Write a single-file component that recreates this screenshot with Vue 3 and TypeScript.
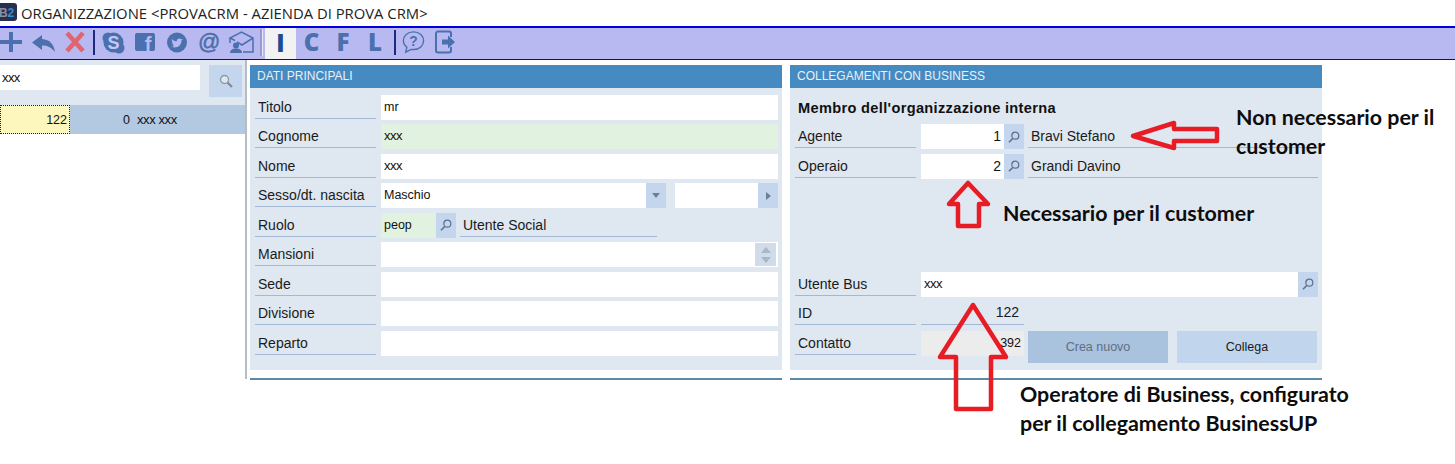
<script setup lang="ts">
const leftFull = [
  { label: 'Titolo', value: 'mr', tone: '' },
  { label: 'Cognome', value: 'xxx', tone: 'green tight' },
  { label: 'Nome', value: 'xxx', tone: 'tight' },
]
const leftRest = ['Sede', 'Divisione', 'Reparto']
const people = [
  { label: 'Agente', id: '1', name: 'Bravi Stefano' },
  { label: 'Operaio', id: '2', name: 'Grandi Davino' },
]
</script>

<template>
  <div class="page">
    <header class="titlebar">
      <svg class="logo" width="17" height="18" viewBox="0 0 17 18">
        <rect x="-3" width="20" height="18" rx="3" fill="#2b2f4e" />
        <text x="-1" y="14" class="glyph" font-size="12" fill="#8a90a0">B</text>
        <text x="7.500" y="14" class="glyph" font-size="12" fill="#2f8fd8">2</text>
      </svg>
      <span>ORGANIZZAZIONE &lt;PROVACRM - AZIENDA DI PROVA CRM&gt;</span>
    </header>

    <nav class="toolbar">
      <svg class="tool w22" viewBox="0 0 22 24"><path d="M11 2v20M0 12h22" stroke="#4a70ad" stroke-width="4" fill="none" /></svg>
      <svg class="tool w23 ml10" viewBox="0 0 23 24"><path d="M10 5 0 12.500 10 20v-4.500c5.500 0 9 1.500 13 6.500-1-7.500-5-12.500-13-13z" fill="#4a70ad" /></svg>
      <svg class="tool w20 ml10" viewBox="0 0 20 24"><path d="M2 3l16 18M18 3 2 21" stroke="#e0656f" stroke-width="4.500" fill="none" /></svg>
      <i class="sep dark ml8"></i>
      <svg class="tool w23 ml7" viewBox="0 0 23 24">
        <circle cx="6" cy="8" r="5.500" fill="#4a70ad" /><circle cx="17" cy="18" r="5.500" fill="#4a70ad" /><circle cx="11.500" cy="12.500" r="10" fill="#4a70ad" />
        <text x="11.500" y="19" text-anchor="middle" class="glyph" font-size="18" fill="#c6c6f5">S</text>
      </svg>
      <svg class="tool w20 ml10" viewBox="0 0 20 24">
        <rect y="3" width="20" height="18" rx="2" fill="#4a70ad" />
        <text x="13" y="21" text-anchor="middle" class="glyph" font-size="20" fill="#b9b9f1">f</text>
      </svg>
      <svg class="tool w20 ml12" viewBox="0 0 20 24">
        <circle cx="10" cy="12.500" r="10" fill="#4a70ad" />
        <path transform="translate(-1 .5)" d="M5 16c3 1.500 6 1.200 8-.5 2-1.700 2.500-4 2.500-5.500l1.500-1.500-2 .3c-1-1.500-4.500-1-4.200 2-2 0-3.500-.8-4.800-2.300-.5 1.500 0 2.700 1 3.500l-1-.2c0 1.200.8 2 2 2.500H6.500c.4.800 1 1.200 2 1.300-1 .6-2.200.7-3.500.4z" fill="#b9b9f1" />
      </svg>
      <span class="at ml11">@</span>
      <svg class="tool w25 ml9" viewBox="0 0 25 24">
        <path d="M6 10.500 1 8 12.500 2 24 8V22H14M24 8 13 15 8 12M1 8V13" fill="none" stroke="#4a70ad" stroke-width="1.500" />
        <circle cx="7" cy="15.500" r="3" fill="#4a70ad" /><path d="M1 23c0-3 2-4.500 6-4.500s6 1.500 6 4.500z" fill="#4a70ad" />
      </svg>
      <i class="sep light ml6"></i>
      <span class="letter selected">I</span>
      <span class="letter ml7 w17">C</span>
      <span class="letter ml16 w14">F</span>
      <span class="letter ml18 w14">L</span>
      <i class="sep dark ml12"></i>
      <svg class="tool w23 ml6" viewBox="0 0 25 26">
        <path d="M12.500 2C6 2 1.500 6.200 1.500 11.500c0 3 1.500 5.500 3.800 7.300L4 24l6-3c.8.100 1.700.200 2.500.200 6.500 0 11-4.400 11-9.700S19 2 12.500 2z" fill="none" stroke="#4a70ad" stroke-width="1.500" />
        <text x="12.500" y="17" text-anchor="middle" class="glyph" font-size="15" fill="#4a70ad">?</text>
      </svg>
      <svg class="tool w20 ml10" viewBox="0 0 20 24">
        <path d="M16 7V3.500A2 2 0 0 0 14 1.500H3A2 2 0 0 0 1 3.500v17a2 2 0 0 0 2 2h11a2 2 0 0 0 2-2V17" fill="none" stroke="#4a70ad" stroke-width="2" />
        <path d="M7 9.500h6V5.500l7 6.500-7 6.500v-4H7z" fill="#4a70ad" />
      </svg>
    </nav>

    <main class="main">
      <aside class="side">
        <div class="search">
          <div class="search-input">xxx</div>
          <button class="search-btn" type="button">
            <svg width="14" height="14" viewBox="0 0 14 14">
              <circle cx="5.500" cy="5.500" r="4" fill="#dfe7ef" stroke="#8d9aa6" stroke-width="1.300" />
              <path d="M8.500 8.500 13 13" stroke="#7f8b97" stroke-width="2.200" />
            </svg>
          </button>
        </div>
        <div class="result">
          <div class="result-id">122</div>
          <div class="result-num">0</div>
          <div class="result-name">xxx xxx</div>
        </div>
      </aside>

      <section class="column">
        <div class="panel">
          <h2 class="panel-head">DATI PRINCIPALI</h2>
          <div class="rows">
            <div v-for="r in leftFull" :key="r.label" class="row">
              <label class="lab">{{ r.label }}</label>
              <div class="field grow" :class="r.tone">{{ r.value }}</div>
            </div>
            <div class="row">
              <label class="lab">Sesso/dt. nascita</label>
              <div class="field sex">Maschio</div>
              <button class="icon-btn" type="button"><i class="tri down"></i></button>
              <div class="field date"></div>
              <button class="icon-btn" type="button"><i class="tri right"></i></button>
            </div>
            <div class="row">
              <label class="lab">Ruolo</label>
              <div class="field role green">peop</div>
              <button class="icon-btn" type="button">
                <svg class="lens" viewBox="0 0 12 12"><circle cx="7.300" cy="4.700" r="3.500" fill="none" stroke="#5a7290" stroke-width="1.200" /><path d="M5 7.300 1 11.200" stroke="#5a7290" stroke-width="1.600" /></svg>
              </button>
              <div class="text-val role-text">Utente Social</div>
            </div>
            <div class="row">
              <label class="lab">Mansioni</label>
              <div class="field grow spin-host">
                <div class="spin"><i class="tri up"></i><i class="tri down"></i></div>
              </div>
            </div>
            <div v-for="r in leftRest" :key="r" class="row">
              <label class="lab">{{ r }}</label>
              <div class="field grow"></div>
            </div>
          </div>
        </div>
        <div class="rule"></div>
      </section>

      <section class="column second">
        <div class="panel">
          <h2 class="panel-head">COLLEGAMENTI CON BUSINESS</h2>
          <div class="member">Membro dell'organizzazione interna</div>
          <div class="rows people">
            <div v-for="p in people" :key="p.label" class="row">
              <label class="lab">{{ p.label }}</label>
              <div class="field num">{{ p.id }}</div>
              <button class="icon-btn" type="button">
                <svg class="lens" viewBox="0 0 12 12"><circle cx="7.300" cy="4.700" r="3.500" fill="none" stroke="#5a7290" stroke-width="1.200" /><path d="M5 7.300 1 11.200" stroke="#5a7290" stroke-width="1.600" /></svg>
              </button>
              <div class="text-val person">{{ p.name }}</div>
            </div>
          </div>
          <div class="rows bus">
            <div class="row">
              <label class="lab">Utente Bus</label>
              <div class="field grow tight">xxx</div>
              <button class="icon-btn" type="button">
                <svg class="lens" viewBox="0 0 12 12"><circle cx="7.300" cy="4.700" r="3.500" fill="none" stroke="#5a7290" stroke-width="1.200" /><path d="M5 7.300 1 11.200" stroke="#5a7290" stroke-width="1.600" /></svg>
              </button>
            </div>
            <div class="row">
              <label class="lab">ID</label>
              <div class="text-val id-val">122</div>
            </div>
            <div class="row last">
              <label class="lab">Contatto</label>
              <div class="field contact">392</div>
              <button class="action off" type="button">Crea nuovo</button>
              <button class="action on" type="button">Collega</button>
            </div>
          </div>
        </div>
        <div class="rule"></div>
      </section>
    </main>

    <svg class="arrows" width="1455" height="464" viewBox="0 0 1455 464">
      <g fill="none" stroke="#e81c24" stroke-width="4.500" stroke-linejoin="round">
        <path d="M1133 136 1174 123V129H1217V141H1174V148Z" />
        <path d="M968 183 988 204H979V226H958V204H949Z" />
        <path d="M973 305 1006 357H991V409H956V357H940Z" />
      </g>
    </svg>
    <div class="note n1">Non necessario per il<br />customer</div>
    <div class="note n2">Necessario per il customer</div>
    <div class="note n3">Operatore di Business, configurato<br />per il collegamento BusinessUP</div>
  </div>
</template>

<style scoped>
.page {
  position: relative;
  width: 1455px;
  height: 464px;
  overflow: hidden;
  background: #fff;
  font-family: "Liberation Sans", Arial, sans-serif;
  color: #111;
}
.titlebar {
  height: 26px;
  display: flex;
  align-items: center;
  gap: 4px;
  font: 14.840px "Open Sans", sans-serif;
  color: #222;
}
.logo { margin-top: -2px; }
.toolbar {
  height: 28px;
  padding-bottom: 3px;
  box-sizing: content-box;
  border-top: 2px solid #0000d8;
  border-bottom: 1px solid #101070;
  background: #b9b9f1;
  display: flex;
  align-items: center;
}
.tool { height: 24px; flex: none; display: block; overflow: visible; }
.w20 { width: 20px; }
.w22 { width: 22px; }
.w23 { width: 23px; }
.w25 { width: 25px; }
.glyph { font-family: "Liberation Sans", sans-serif; font-weight: 700; }
.at {
  width: 22px;
  font: 400 22px/28px "Liberation Sans", sans-serif;
  -webkit-text-stroke: .5px #4a70ad;
  color: #4a70ad;
  text-align: center;
  flex: none;
}
.sep { width: 2px; height: 25px; flex: none; }
.sep.dark { background: #1d2a80; }
.sep.light { width: 3px; background: #9a9ac8; border-right: 1px solid #e5e5fa; height: 27px; box-sizing: border-box; }
.letter {
  flex: none;
  font: 800 24px/28px "Open Sans", sans-serif;
  color: #4a70ad;
  text-align: center;
}
.selected {
  width: 31px;
  height: 31px;
  margin: 0 0 -3px 2px;
  line-height: 29px;
  background: #f2f2f2;
  color: #1c4a94;
}
.w17 { width: 17px; }
.w14 { width: 14px; }
.ml6 { margin-left: 6px; }
.ml7 { margin-left: 7px; }
.ml8 { margin-left: 8px; }
.ml9 { margin-left: 9px; }
.ml10 { margin-left: 10px; }
.ml11 { margin-left: 11px; }
.ml12 { margin-left: 12px; }
.ml16 { margin-left: 16px; }
.ml18 { margin-left: 18px; }

.main { display: flex; height: 319px; }
.side {
  width: 245px;
  flex: none;
  border-right: 2px solid #b4bcc8;
  box-sizing: content-box;
}
.search {
  height: 45px;
  box-sizing: border-box;
  padding-top: 5px;
  background: #dfe7f1;
  display: flex;
  align-items: flex-start;
}
.search-input {
  width: 200px;
  height: 25px;
  background: #fff;
  font-size: 13px;
  line-height: 25px;
  letter-spacing: -.6px;
  padding-left: 2px;
  box-sizing: border-box;
}
.search-btn {
  width: 33px;
  height: 32px;
  margin-left: 9px;
  border: 0;
  padding: 0;
  background: #c3d6ed;
  display: flex;
  align-items: center;
  justify-content: center;
}
.result { display: flex; height: 29px; background: #b3c9e2; font-size: 12.500px; line-height: 30px; }
.result-id {
  width: 70px;
  box-sizing: border-box;
  background: #fdf7bd;
  border: 1px dotted #222;
  line-height: 28px;
  text-align: right;
  padding-right: 2px;
}
.result-num { width: 60px; text-align: right; }
.result-name { margin-left: 7px; font-size: 13px; letter-spacing: -.4px; }

.column { width: 532px; flex: none; margin-left: 3px; padding-top: 5px; }
.column.second { margin-left: 8px; }
.panel { height: 305px; background: #dfe7f1; box-sizing: border-box; }
.panel-head {
  margin: 0;
  height: 23px;
  background: #458bc2;
  color: #e8f0f8;
  font: 400 12px/23px "Liberation Sans", sans-serif;
  padding-left: 7px;
}
.rule { height: 2px; margin-top: 8px; background: #5b8aa8; }
.rows { display: flex; flex-direction: column; gap: 4.500px; padding: 6.900px 4px 0 5px; }
.row { display: flex; height: 25px; flex: none; }
.lab {
  width: 121px;
  flex: none;
  height: 25px;
  box-sizing: border-box;
  border-bottom: 1px solid #a3b8d4;
  padding: 4px 0 0 3px;
  font-size: 14px;
  line-height: 18px;
  color: #1a1a1a;
  margin-top: -1px;
}
.field {
  margin-left: 5px;
  height: 25px;
  background: #fff;
  padding-left: 3px;
  box-sizing: border-box;
  font-size: 12.500px;
  line-height: 24px;
}
.field.grow { flex: 1; }
.field.green { background: #e2f2e0; }
.field.tight { font-size: 13px; letter-spacing: -.5px; }
.sex { width: 265px; }
.date { width: 83px; margin-left: 9px; }
.role { width: 55px; }
.icon-btn {
  width: 20px;
  height: 25px;
  flex: none;
  border: 0;
  padding: 0;
  background: #c3d6ed;
  display: flex;
  align-items: center;
  justify-content: center;
}
.lens { width: 12px; height: 12px; }
.tri { display: block; width: 0; height: 0; border-style: solid; border-color: transparent; }
.tri.down { border-width: 5px 4px 0; border-top-color: #6e7f94; }
.tri.up { border-width: 0 5px 6px; border-bottom-color: #a9b6c6; }
.tri.right { border-width: 4px 0 4px 5px; border-left-color: #6e7f94; }
.spin-host { position: relative; }
.spin {
  position: absolute;
  right: 2px;
  top: 1px;
  width: 21px;
  height: 23px;
  background: #d0dcea;
  display: flex;
  flex-direction: column;
  align-items: center;
  justify-content: center;
  gap: 4px;
}
.spin .tri.down { border-width: 6px 5px 0; border-top-color: #a9b6c6; }
.text-val {
  height: 25px;
  box-sizing: border-box;
  border-bottom: 1px solid #a3b8d4;
  font-size: 14px;
  line-height: 26px;
  color: #1a1a1a;
  margin-top: -1px;
}
.role-text { width: 197px; margin-left: 4px; padding-left: 3px; }
.person { flex: 1; margin-left: 4px; padding-left: 3px; line-height: 27px; }
.member {
  font-size: 14.600px;
  font-weight: 700;
  letter-spacing: .33px;
  line-height: 16px;
  padding: 12px 0 0 8px;
  height: 17px;
}
.rows.people { padding-top: 7.100px; }
.people .row { width: 523px; }
.num { width: 83px; text-align: right; padding: 0 3px 0 0; font-size: 14px; }
.rows.bus { padding-top: 93.300px; }
.bus .row { width: 523px; }
.id-val { width: 103px; margin-left: 5px; text-align: right; padding-right: 5px; line-height: 24px; }
.contact {
  width: 103px;
  background: #ececec;
  text-align: right;
  padding: 0 3px 0 0;
}
.row.last { height: 32px; }
.action {
  width: 140px;
  height: 32px;
  flex: none;
  border: 0;
  padding: 0;
  font: 12.500px "Liberation Sans", sans-serif;
  margin-left: 4px;
}
.action.off { background: #a9c2de; color: #5f6f80; }
.action.on { background: #c1d5ed; color: #1a1a1a; margin-left: 9px; }

.arrows { position: absolute; left: 0; top: 0; pointer-events: none; }
.note {
  position: absolute;
  font: 700 21.400px/28.500px Lato, sans-serif;
  color: #0d0d0d;
  white-space: nowrap;
}
.n1 { left: 1236px; top: 103px; }
.n2 { left: 1003px; top: 199px; }
.n3 { left: 1020px; top: 380px; }
</style>
